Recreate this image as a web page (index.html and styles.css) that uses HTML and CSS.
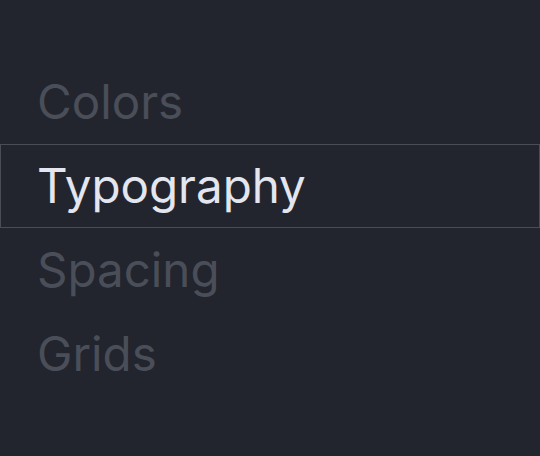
FILE: index.html
```html
<!DOCTYPE html>
<html lang="en">
<head>
<meta charset="utf-8">
<title>Sections</title>
<link rel="stylesheet" href="styles.css">
</head>
<body>
<nav class="menu">
  <a class="item">Colors</a>
  <a class="item active">Typography</a>
  <a class="item">Spacing</a>
  <a class="item">Grids</a>
</nav>
</body>
</html>
```
FILE: styles.css
```css
html, body {
  margin: 0;
  padding: 0;
  background: #22252e;
  height: 100%;
}
body {
  font-family: Inter, "Noto Sans", sans-serif;
  overflow: hidden;
}
.menu {
  display: flex;
  flex-direction: column;
  padding-top: 60px;
  width: 540px;
}
.item {
  display: block;
  box-sizing: border-box;
  font-size: 47.5px;
  line-height: 48px;
  padding: 17px 36px;
  border: 1px solid transparent;
  color: #4a4e58;
  letter-spacing: 0;
}
.item.active {
  color: #e4e6ef;
  border-color: #4a4d56;
}
```
